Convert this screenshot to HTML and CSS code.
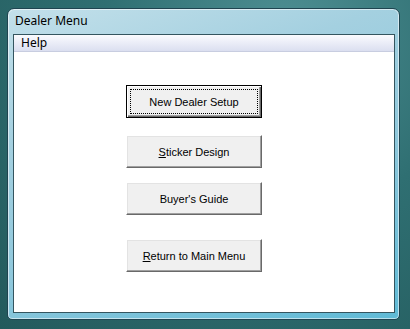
FILE: index.html
```html
<!DOCTYPE html>
<html>
<head>
    <title>Dealer Menu</title>
    <link rel="stylesheet" href="styles.css">
</head>
<body>
    <div class="window">
        <div class="titlebar">Dealer Menu</div>
        <div class="client">
            <div class="menubar"><span class="menu-item">Help</span></div>
            <div class="content">
                <button class="btn btn-focus"><span class="focus-rect">New Dealer Setup</span></button>
                <button class="btn btn-2"><u>S</u>ticker Design</button>
                <button class="btn btn-3">Buyer's Guide</button>
                <button class="btn btn-4"><u>R</u>eturn to Main Menu</button>
            </div>
        </div>
    </div>
</body>
</html>
```

FILE: styles.css
```css
body { margin: 0; width: 410px; height: 329px; overflow: hidden; background: radial-gradient(ellipse at 70% 10%, #4e8f93 0%, #2f6f72 45%, #235a5c 100%); font-family: "Liberation Sans", Arial, sans-serif; }
.window { box-sizing: border-box; margin: 8px 0 0 7px; width: 393px; height: 312px; padding: 0 4px 6px 5px; border: 1px solid #1f4450; border-radius: 7px 7px 5px 5px; background: linear-gradient(160deg, #c3e0ea 0%, #a4d0e0 30%, #8fc8dc 60%, #5fbad6 100%); box-shadow: inset 0 0 0 1px rgba(255,255,255,0.55); display: flex; flex-direction: column; }
.titlebar { height: 25px; line-height: 23px; padding-left: 2px; font-family: "Noto Sans", "Liberation Sans", sans-serif; font-size: 12px; color: #000; }
.client { flex: 1; display: flex; flex-direction: column; background: #fff; border: 1px solid #34555f; }
.menubar { height: 16px; line-height: 16px; padding-left: 7px; font-family: "Noto Sans", "Liberation Sans", sans-serif; font-size: 12px; color: #000; background: linear-gradient(#fafbfe 0%, #eceef8 45%, #dbdff0 100%); border-bottom: 1px solid #c8cde0; }
.content { flex: 1; display: flex; flex-direction: column; align-items: flex-start; padding-top: 33px; padding-left: 112px; }
.btn { box-sizing: border-box; width: 136px; height: 33px; padding: 0; background: #f0f0f0; font-family: "Liberation Sans", Arial, sans-serif; font-size: 11px; color: #000; border: 1px solid; border-color: #fff #696969 #696969 #fff; box-shadow: inset -1px -1px 0 #a0a0a0, inset 1px 1px 0 #e3e3e3; }
.btn-focus { border: 1px solid #000; box-shadow: inset 1px 1px 0 #fff, inset -1px -1px 0 #696969, inset -2px -2px 0 #a0a0a0; padding: 3px; }
.focus-rect { display: flex; align-items: center; justify-content: center; height: 100%; border: 1px dotted #000; box-sizing: border-box; }
.btn-2 { margin-top: 17px; }
.btn-3 { margin-top: 14px; }
.btn-4 { margin-top: 24px; }
```
